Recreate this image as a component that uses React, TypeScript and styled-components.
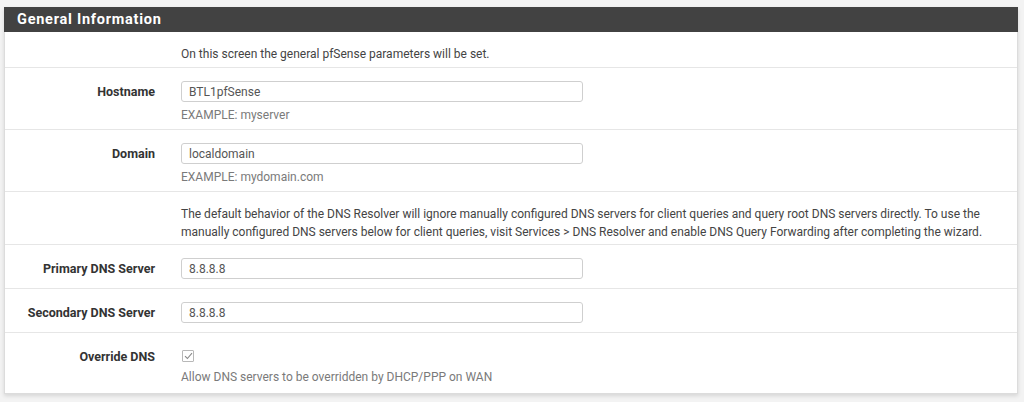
import styled, { createGlobalStyle } from "styled-components";

const GlobalStyle = createGlobalStyle`
  html, body {
    margin: 0;
    padding: 0;
    background: #f3f3f3;
    font-family: Roboto, "Liberation Sans", Arial, sans-serif;
  }
`;

const Page = styled.div`
  padding: 7px 6px 10px 4px;
`;

const Panel = styled.section`
  background: #ffffff;
  border: 1px solid #dcdcdc;
  border-top: none;
  box-shadow: 0 2px 4px rgba(0, 0, 0, 0.12);
`;

const Heading = styled.h2`
  margin: 0 -1px;
  height: 25px;
  padding: 0 13px;
  display: flex;
  align-items: center;
  background: #424242;
  color: #ffffff;
  font-size: 14.5px;
  font-weight: 700;
  letter-spacing: 0.75px;
`;

const Row = styled.div<{ $pb?: number }>`
  display: grid;
  grid-template-columns: 150px 1fr;
  column-gap: 26px;
  padding: 13px 4px ${({ $pb }) => $pb ?? 9}px 0;
  border-top: 1px solid #e6e6e6;

  &:first-of-type {
    border-top: none;
  }
`;

const Label = styled.div`
  text-align: right;
  font-size: 12.5px;
  font-weight: 700;
  color: #333333;
  line-height: 21px;
`;

const Control = styled.div`
  display: flex;
  flex-direction: column;
  align-items: flex-start;
`;

const Text = styled.p`
  margin: 0;
  font-size: 12px;
  line-height: 18px;
  color: #444444;
`;

const Input = styled.input`
  box-sizing: border-box;
  width: 402px;
  height: 21px;
  padding: 0 7px;
  border: 1px solid #cfcfcf;
  border-radius: 3px;
  background: #ffffff;
  font-family: inherit;
  font-size: 12px;
  color: #555555;
  outline: none;
`;

const Help = styled.span<{ $mt?: number }>`
  margin-top: ${({ $mt }) => $mt ?? 4}px;
  font-size: 12px;
  line-height: 18px;
  color: #7a7a7a;
`;

const CheckWrap = styled.div`
  height: 19px;
  display: flex;
  align-items: center;
`;

const CheckBox = styled.span`
  box-sizing: border-box;
  width: 12px;
  height: 12px;
  margin-left: 1px;
  border: 1px solid #b8b8b8;
  border-radius: 1px;
  background: #ffffff;
  display: flex;
  align-items: center;
  justify-content: center;
`;

const Field = ({ label, value, help }: { label: string; value: string; help?: string }) => (
  <Row $pb={help ? 5 : 9}>
    <Label>{label}</Label>
    <Control>
      <Input defaultValue={value} readOnly />
      {help && <Help>{help}</Help>}
    </Control>
  </Row>
);

const App = () => {
  return (
    <>
      <GlobalStyle />
      <Page>
        <Panel>
          <Heading>General Information</Heading>
          <div>
            <Row $pb={4}>
              <div />
              <Text>On this screen the general pfSense parameters will be set.</Text>
            </Row>
            <Field label="Hostname" value="BTL1pfSense" help="EXAMPLE: myserver" />
            <Field label="Domain" value="localdomain" help="EXAMPLE: mydomain.com" />
            <Row $pb={3}>
              <div />
              <Text>
                The default behavior of the DNS Resolver will ignore manually configured DNS servers for client queries and
                query root DNS servers directly. To use the manually configured DNS servers below for client queries, visit
                Services &gt; DNS Resolver and enable DNS Query Forwarding after completing the wizard.
              </Text>
            </Row>
            <Field label="Primary DNS Server" value="8.8.8.8" />
            <Field label="Secondary DNS Server" value="8.8.8.8" />
            <Row $pb={7}>
              <Label>Override DNS</Label>
              <Control>
                <CheckWrap>
                  <CheckBox>
                    <svg width="9" height="8" viewBox="0 0 9 8">
                      <path d="M1 4.2 L3.4 6.5 L8 1.2" fill="none" stroke="#8a8a8a" strokeWidth="1.1" />
                    </svg>
                  </CheckBox>
                </CheckWrap>
                <Help $mt={3}>Allow DNS servers to be overridden by DHCP/PPP on WAN</Help>
              </Control>
            </Row>
          </div>
        </Panel>
      </Page>
    </>
  );
};

export default App;
